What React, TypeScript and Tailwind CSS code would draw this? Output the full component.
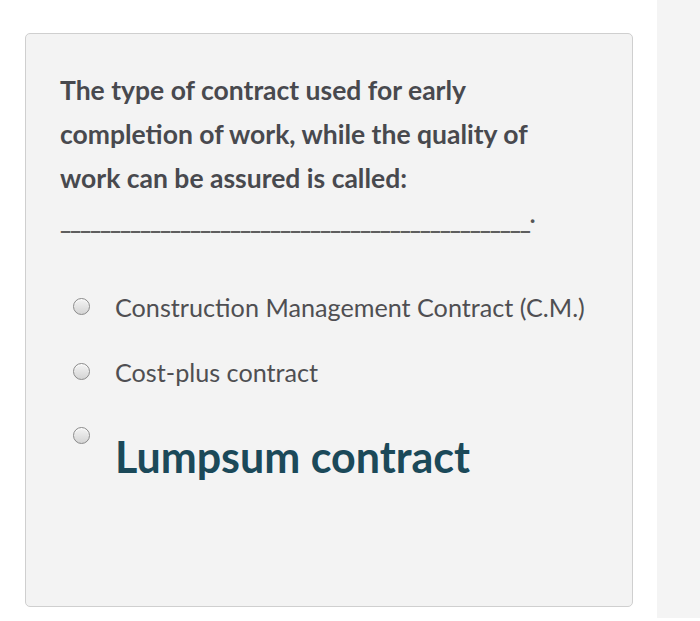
const Radio = () => (
  <span className="mt-[1px] block h-[17px] w-[17px] shrink-0 rounded-full border border-[#8a8a8a] bg-gradient-to-b from-[#f4f4f4] to-[#d4d4d4] shadow-[inset_0_1px_1px_rgba(255,255,255,0.9)]" />
);

export default function App() {
  return (
    <div className="relative h-[621px] w-[700px] overflow-hidden bg-white font-['Lato',sans-serif]">
      <div className="absolute right-0 top-0 h-[618px] w-[43px] bg-[#f4f4f4]" />
      <div className="ml-[25px] pt-[33px]">
        <div className="h-[574px] w-[608px] rounded-[5px] border border-[#cfcfcf] bg-[#f3f3f3] pl-[34px] pt-[34px]">
          <p className="text-[26.5px] font-bold leading-[44px] text-[#48494e]">
            The type of contract used for early
            <br />
            completion of work, while the quality of
            <br />
            work can be assured is called:
          </p>
          <p className="-mt-[2px] text-[24px] font-bold leading-[44px] text-[#5e5e5e]">
            <span className="tracking-[-1.2px]">_______________________________________________</span>
            <span className="relative -top-[6px] text-[#555]">.</span>
          </p>
          <div className="mt-[48px] flex flex-col">
            <label className="flex h-[65px] items-start gap-[25px] pl-[13px]">
              <span className="pt-[7px]"><Radio /></span>
              <span className="text-[25.2px] leading-[34px] text-[#4f4f52]">Construction Management Contract (C.M.)</span>
            </label>
            <label className="flex h-[65px] items-start gap-[25px] pl-[13px]">
              <span className="pt-[7px]"><Radio /></span>
              <span className="text-[25.2px] leading-[34px] text-[#4f4f52]">Cost-plus contract</span>
            </label>
            <label className="flex items-start gap-[25px] pl-[13px]">
              <span className="pt-[6px]"><Radio /></span>
              <span className="pt-[11px] text-[43px] font-bold leading-[52px] text-[#1b4959]">Lumpsum contract</span>
            </label>
          </div>
        </div>
      </div>
    </div>
  );
}
